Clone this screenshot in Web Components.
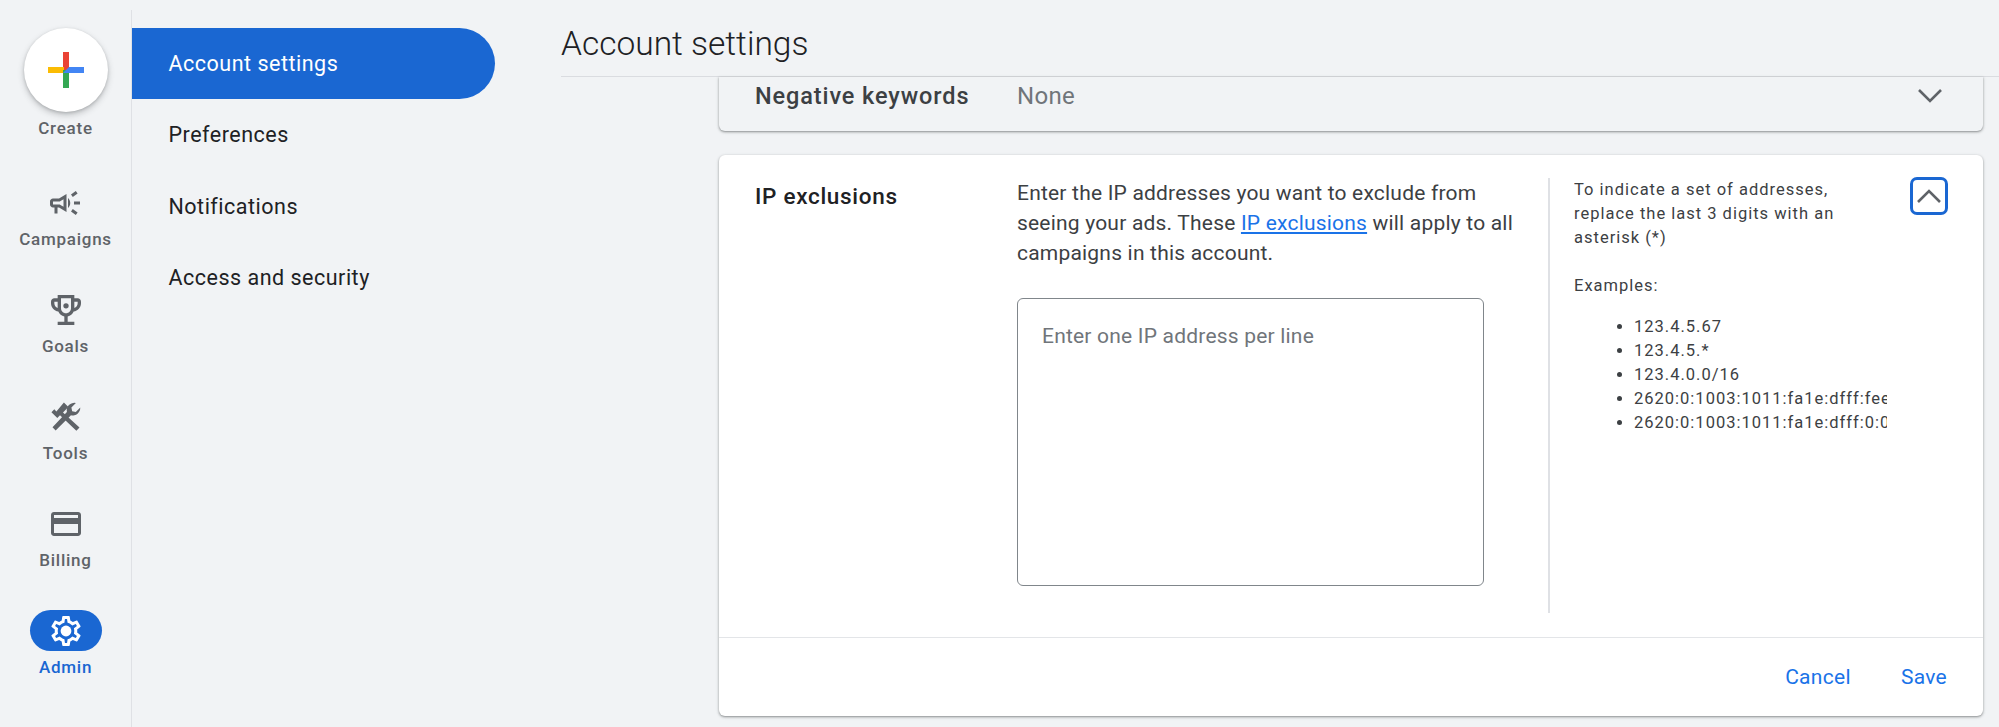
<!DOCTYPE html>
<html>
<head>
<meta charset="utf-8">
<title>Account settings</title>
<style>
html,body{margin:0;height:100%;overflow:hidden;background:#f1f3f5;font-family:Roboto,"Liberation Sans",sans-serif;}
</style>
</head>
<body>
<ads-shell>
  <ads-rail slot="rail">
    <rail-create></rail-create>
    <rail-item label="Campaigns" icon="campaign"></rail-item>
    <rail-item label="Goals" icon="goal" size="40"></rail-item>
    <rail-item label="Tools" icon="tools"></rail-item>
    <rail-item label="Billing" icon="billing"></rail-item>
    <rail-item label="Admin" icon="admin" active></rail-item>
  </ads-rail>
  <settings-nav slot="nav">
    <nav-item active>Account settings</nav-item>
    <nav-item>Preferences</nav-item>
    <nav-item>Notifications</nav-item>
    <nav-item>Access and security</nav-item>
  </settings-nav>
  <page-header slot="header">Account settings</page-header>
  <collapsed-row title="Negative keywords" value="None"></collapsed-row>
  <ip-card></ip-card>
</ads-shell>
<script>
const ICONS={
  campaign:'<path d="M18 11v2h4v-2h-4zm-2 6.61c.96.71 2.21 1.65 3.2 2.39.4-.53.8-1.07 1.2-1.6-.99-.74-2.24-1.68-3.2-2.4-.4.54-.8 1.08-1.2 1.61zM20.4 5.6c-.4-.53-.8-1.07-1.2-1.6-.99.74-2.24 1.68-3.2 2.4.4.53.8 1.07 1.2 1.6.96-.72 2.21-1.65 3.2-2.4zM4 9c-1.1 0-2 .9-2 2v2c0 1.1.9 2 2 2h1v4h2v-4h1l5 3V6L8 9H4zm5.03 1.71L11 9.53v4.94l-1.97-1.18-.48-.29H4v-2h4.55l.48-.29zM15.5 12c0-1.33-.58-2.53-1.5-3.35v6.69c.92-.81 1.5-2.01 1.5-3.34z"/>',
  goal:'<path d="M19 5h-2V3H7v2H5c-1.1 0-2 .9-2 2v1c0 2.55 1.92 4.63 4.39 4.94.63 1.5 1.98 2.63 3.61 2.96V19H7v2h10v-2h-4v-3.1c1.63-.33 2.98-1.46 3.61-2.96C19.08 12.63 21 10.55 21 8V7c0-1.1-.9-2-2-2zM5 8V7h2v3.82C5.84 10.4 5 9.3 5 8zm7 6c-1.65 0-3-1.35-3-3V5h6v6c0 1.65-1.35 3-3 3zm7-6c0 1.3-.84 2.4-2 2.82V7h2v1z"/><circle cx="12" cy="9.5" r="1.6"/>',
  tools:'<path d="M21.5 5.6l-3 3-2.4-.5-.5-2.4 3-3a5 5 0 0 0-6 6L3 18.9 5.1 21l10.2-10.2a5 5 0 0 0 6.2-5.2z"/><path d="M10.6 2.4l3 3-3.6 3.6L21 19l-2.1 2.1L8 10.9l-1.8 1.8-3.9-3.9 1.9-1.9 1.4 1.4z"/>',
  billing:'<path d="M20 4H4c-1.11 0-1.99.89-1.99 2L2 18c0 1.11.89 2 2 2h16c1.11 0 2-.89 2-2V6c0-1.11-.89-2-2-2zm0 14H4v-6h16v6zm0-10H4V6h16v2z"/>',
  admin:'<path d="M19.43 12.98c.04-.32.07-.64.07-.98 0-.34-.03-.66-.07-.98l2.11-1.65c.19-.15.24-.42.12-.64l-2-3.46c-.09-.16-.26-.25-.44-.25-.06 0-.12.01-.17.03l-2.49 1c-.52-.4-1.08-.73-1.69-.98l-.38-2.65C14.46 2.18 14.25 2 14 2h-4c-.25 0-.46.18-.49.42l-.38 2.65c-.61.25-1.17.59-1.69.98l-2.49-1c-.06-.02-.12-.03-.18-.03-.17 0-.34.09-.43.25l-2 3.46c-.13.22-.07.49.12.64l2.11 1.65c-.04.32-.07.65-.07.98 0 .33.03.66.07.98l-2.11 1.65c-.19.15-.24.42-.12.64l2 3.46c.09.16.26.25.44.25.06 0 .12-.01.17-.03l2.49-1c.52.4 1.08.73 1.69.98l.38 2.65c.03.24.24.42.49.42h4c.25 0 .46-.18.49-.42l.38-2.65c.61-.25 1.17-.59 1.69-.98l2.49 1c.06.02.12.03.18.03.17 0 .34-.09.43-.25l2-3.46c.12-.22.07-.49-.12-.64l-2.11-1.65zm-1.98-1.71c.04.31.05.52.05.73 0 .21-.02.43-.05.73l-.14 1.13.89.7 1.08.84-.7 1.21-1.27-.51-1.04-.42-.9.68c-.43.32-.84.56-1.25.73l-1.06.43-.16 1.13-.2 1.35h-1.4l-.19-1.35-.16-1.13-1.06-.43c-.43-.18-.83-.41-1.23-.71l-.91-.7-1.06.43-1.27.51-.7-1.21 1.08-.84.89-.7-.14-1.13c-.03-.31-.05-.54-.05-.74s.02-.43.05-.73l.14-1.13-.89-.7-1.08-.84.7-1.21 1.27.51 1.04.42.9-.68c.43-.32.84-.56 1.25-.73l1.06-.43.16-1.13.2-1.35h1.39l.19 1.35.16 1.13 1.06.43c.43.18.83.41 1.23.71l.91.7 1.06-.43 1.27-.51.7 1.21-1.07.85-.89.7.14 1.13z"/><circle cx="12" cy="12" r="3.6"/>'
};

class AdsShell extends HTMLElement{
  constructor(){
    super();
    this.attachShadow({mode:"open"});
    this.shadowRoot.innerHTML=`
    <style>
      :host{display:flex;height:727px;width:1999px;overflow:hidden;}
      .main{flex:1;min-width:0;display:flex;flex-direction:column;}
      .content{padding:0 16px 0 164px;display:flex;flex-direction:column;gap:24px;}
    </style>
    <slot name="rail"></slot>
    <slot name="nav"></slot>
    <div class="main">
      <slot name="header"></slot>
      <div class="content"><slot></slot></div>
    </div>`;
  }
}
customElements.define("ads-shell",AdsShell);

class AdsRail extends HTMLElement{
  constructor(){
    super();
    this.attachShadow({mode:"open"});
    this.shadowRoot.innerHTML=`
    <style>
      :host{display:flex;flex-direction:column;align-items:center;box-sizing:border-box;width:132px;margin-top:10px;padding-top:18px;border-right:1.5px solid #dfe1e5;}
    </style>
    <slot></slot>`;
  }
}
customElements.define("ads-rail",AdsRail);

class RailCreate extends HTMLElement{
  constructor(){
    super();
    this.attachShadow({mode:"open"});
    this.shadowRoot.innerHTML=`
    <style>
      :host{display:flex;flex-direction:column;align-items:center;height:154px;}
      .fab{width:84px;height:84px;border-radius:50%;background:#fff;display:flex;align-items:center;justify-content:center;box-shadow:0 3px 6px rgba(60,64,67,.28),0 1px 3px rgba(60,64,67,.2);}
      .lbl{font:500 17px/32px Roboto,"Liberation Sans",sans-serif;letter-spacing:.75px;color:#5f6368;}
    </style>
    <div class="fab">
      <svg width="36" height="36" viewBox="0 0 36 36">
        <rect x="15" y="0" width="6" height="18" fill="#ea4335"/>
        <rect x="0" y="15" width="16" height="6" fill="#fbbc04"/>
        <rect x="15" y="18" width="6" height="18" fill="#34a853"/>
        <path d="M21 15h15v6H15z" fill="#4285f4"/>
      </svg>
    </div>
    <div class="lbl">Create</div>`;
  }
}
customElements.define("rail-create",RailCreate);

class RailItem extends HTMLElement{
  constructor(){
    super();
    this.attachShadow({mode:"open"});
  }
  connectedCallback(){
    const active=this.hasAttribute("active");
    const size=this.getAttribute("size")||36;
    this.shadowRoot.innerHTML=`
    <style>
      :host{display:flex;flex-direction:column;align-items:center;height:107px;}
      .ic{width:72px;height:41px;border-radius:21px;display:flex;align-items:center;justify-content:center;background:${active?"#1a67d2":"transparent"};}
      svg{width:${size}px;height:${size}px;fill:${active?"#fff":"#5f6368"};}
      .lbl{font:500 17px/32px Roboto,"Liberation Sans",sans-serif;letter-spacing:.75px;color:${active?"#1a67d2":"#5f6368"};}
    </style>
    <div class="ic"><svg viewBox="0 0 24 24">${ICONS[this.getAttribute("icon")]}</svg></div>
    <div class="lbl">${this.getAttribute("label")}</div>`;
  }
}
customElements.define("rail-item",RailItem);

class SettingsNav extends HTMLElement{
  constructor(){
    super();
    this.attachShadow({mode:"open"});
    this.shadowRoot.innerHTML=`
    <style>
      :host{display:flex;flex-direction:column;box-sizing:border-box;width:429px;padding-top:28px;}
    </style>
    <slot></slot>`;
  }
}
customElements.define("settings-nav",SettingsNav);

class NavItem extends HTMLElement{
  constructor(){
    super();
    this.attachShadow({mode:"open"});
    this.shadowRoot.innerHTML=`
    <style>
      :host{display:flex;align-items:center;box-sizing:border-box;width:363px;height:71.3px;padding-left:36.5px;border-radius:0 36px 36px 0;font:400 21.5px Roboto,"Liberation Sans",sans-serif;letter-spacing:.5px;color:#202124;}
      :host([active]){background:#1a67d2;color:#fff;}
    </style>
    <slot></slot>`;
  }
}
customElements.define("nav-item",NavItem);

class PageHeader extends HTMLElement{
  constructor(){
    super();
    this.attachShadow({mode:"open"});
    this.shadowRoot.innerHTML=`
    <style>
      :host{display:flex;align-items:center;box-sizing:border-box;height:77px;padding-top:10px;border-bottom:1px solid #dadce0;font:300 33.5px Roboto,"Liberation Sans",sans-serif;color:#202124;}
    </style>
    <slot></slot>`;
  }
}
customElements.define("page-header",PageHeader);

class ChevronIcon extends HTMLElement{
  constructor(){
    super();
    this.attachShadow({mode:"open"});
  }
  connectedCallback(){
    const up=this.hasAttribute("up");
    this.shadowRoot.innerHTML=`
    <style>
      :host{display:block;width:24px;height:14px;}
      svg{display:block;}
    </style>
    <svg width="24" height="14" viewBox="0 0 24 14" fill="none" stroke="#5f6368" stroke-width="2.6">
      <path d="${up?"M1 13 12 2l11 11":"M1 1l11 11L23 1"}"/>
    </svg>`;
  }
}
customElements.define("chevron-icon",ChevronIcon);

class CollapsedRow extends HTMLElement{
  constructor(){
    super();
    this.attachShadow({mode:"open"});
  }
  connectedCallback(){
    this.shadowRoot.innerHTML=`
    <style>
      :host{display:flex;align-items:center;box-sizing:border-box;height:54px;margin-left:-6px;padding:0 41px 17px 36px;background:#f1f3f5;border-radius:0 0 6px 6px;box-shadow:0 1px 2px rgba(60,64,67,.45),0 1px 3px 1px rgba(60,64,67,.12);}
      .t{width:262px;font:500 23.5px Roboto,"Liberation Sans",sans-serif;letter-spacing:.9px;color:#3c4043;}
      .v{flex:1;font:400 24px Roboto,"Liberation Sans",sans-serif;letter-spacing:.3px;color:#70757a;}
    </style>
    <div class="t">${this.getAttribute("title")}</div>
    <div class="v">${this.getAttribute("value")}</div>
    <chevron-icon></chevron-icon>`;
  }
}
customElements.define("collapsed-row",CollapsedRow);

class IpCard extends HTMLElement{
  constructor(){
    super();
    this.attachShadow({mode:"open"});
    this.shadowRoot.innerHTML=`
    <style>
      :host{display:block;height:561px;margin-left:-6px;background:#fff;border-radius:6px;box-shadow:0 1px 2px rgba(60,64,67,.45),0 1px 3px 1px rgba(60,64,67,.12);}
      .top{display:flex;box-sizing:border-box;height:483px;padding:23px 34px 24px 36px;border-bottom:1px solid #e3e5e8;}
      .title{width:262px;flex:none;padding-top:5px;font:500 22.5px/26px Roboto,"Liberation Sans",sans-serif;letter-spacing:.7px;color:#202124;}
      .mid{width:467px;flex:none;}
      .desc{height:90px;white-space:nowrap;font:400 21px/30px Roboto,"Liberation Sans",sans-serif;letter-spacing:.2px;color:#3c4043;}
      a{color:#1a73e8;text-decoration:underline;}
      .area{box-sizing:border-box;height:288px;margin-top:30px;padding:24px;border:1px solid #80868b;border-radius:6px;font:400 21px/26px Roboto,"Liberation Sans",sans-serif;letter-spacing:.2px;color:#70757a;}
      .help{box-sizing:border-box;width:339px;flex:none;margin-left:64px;padding-left:24px;border-left:2px solid #dfe1e5;font:400 16.5px/24px Roboto,"Liberation Sans",sans-serif;letter-spacing:1px;color:#3c4043;overflow:hidden;}
      .help p{margin:0 0 24px;}
      .help ul{margin:17px 0 0;padding-left:60px;white-space:nowrap;}
      .clip{width:314px;overflow:hidden;}
      .toggle{box-sizing:border-box;width:38px;height:38px;flex:none;margin:-1px 0 0 23px;border:3px solid #1a67d2;border-radius:7px;display:flex;align-items:center;justify-content:center;}
      .foot{display:flex;justify-content:flex-end;align-items:center;gap:50px;height:77px;padding-right:36px;font:400 21px Roboto,"Liberation Sans",sans-serif;letter-spacing:.3px;color:#1a73e8;}
    </style>
    <div class="top">
      <div class="title">IP exclusions</div>
      <div class="mid">
        <div class="desc">
          <div>Enter the IP addresses you want to exclude from</div>
          <div>seeing your ads. These <a>IP exclusions</a> will apply to all</div>
          <div>campaigns in this account.</div>
        </div>
        <div class="area">Enter one IP address per line</div>
      </div>
      <div class="help">
        <div class="clip">
          <p>To indicate a set of addresses,<br>replace the last 3 digits with an<br>asterisk (*)</p>
          <div>Examples:</div>
          <ul>
            <li>123.4.5.67</li>
            <li>123.4.5.*</li>
            <li>123.4.0.0/16</li>
            <li>2620:0:1003:1011:fa1e:dfff:fee</li>
            <li>2620:0:1003:1011:fa1e:dfff:0:0</li>
          </ul>
        </div>
      </div>
      <div class="toggle"><chevron-icon up></chevron-icon></div>
    </div>
    <div class="foot"><span>Cancel</span><span>Save</span></div>`;
  }
}
customElements.define("ip-card",IpCard);
</script>
</body>
</html>
